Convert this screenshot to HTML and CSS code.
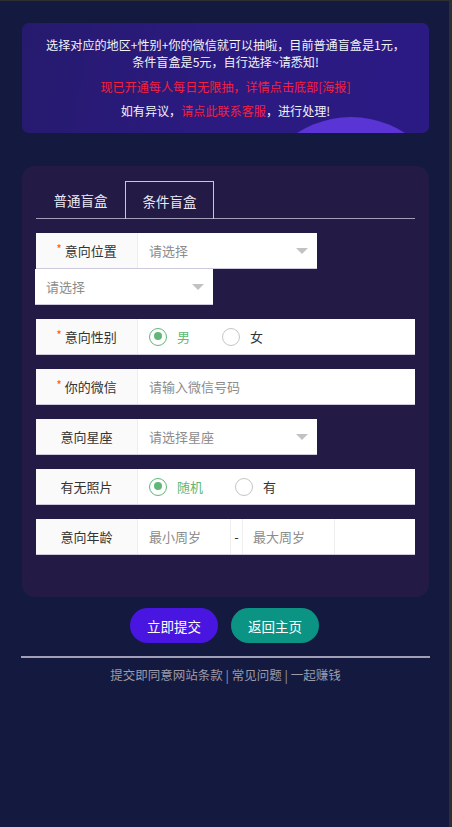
FILE: index.html
```html
<!DOCTYPE html>
<html lang="zh-CN">
<head>
<meta charset="utf-8">
<title>盲盒</title>
<link rel="stylesheet" href="styles.css">
</head>
<body>
<div class="frame">
  <div class="page">
    <section class="notice">
      <div class="notice-orb"></div>
      <p class="n1">选择对应的地区+性别+你的微信就可以抽啦，目前普通盲盒是1元，条件盲盒是5元，自行选择~请悉知!</p>
      <p class="n2 red">现已开通每人每日无限抽，详情点击底部[海报]</p>
      <p class="n3">如有异议，<span class="red">请点此联系客服</span>，进行处理!</p>
    </section>

    <section class="card">
      <div class="tabs">
        <div class="tab">普通盲盒</div>
        <div class="tab active">条件盲盒</div>
      </div>

      <div class="form">
        <div class="group">
          <div class="row short">
            <div class="label"><span class="star">*</span>意向位置</div>
            <div class="field select"><span class="ph">请选择</span><i class="arrow"></i></div>
          </div>
          <div class="sub-select"><span class="ph">请选择</span><i class="arrow"></i></div>
        </div>

        <div class="row">
          <div class="label"><span class="star">*</span>意向性别</div>
          <div class="field radios">
            <span class="radio on"><i class="dot"></i>男</span>
            <span class="radio"><i class="dot"></i>女</span>
          </div>
        </div>

        <div class="row">
          <div class="label"><span class="star">*</span>你的微信</div>
          <div class="field"><span class="ph">请输入微信号码</span></div>
        </div>

        <div class="row short">
          <div class="label">意向星座</div>
          <div class="field select"><span class="ph">请选择星座</span><i class="arrow"></i></div>
        </div>

        <div class="row">
          <div class="label">有无照片</div>
          <div class="field radios">
            <span class="radio on wider"><i class="dot"></i>随机</span>
            <span class="radio"><i class="dot"></i>有</span>
          </div>
        </div>

        <div class="row">
          <div class="label">意向年龄</div>
          <div class="field age">
            <span class="age-in"><span class="ph">最小周岁</span></span>
            <span class="dash">-</span>
            <span class="age-in"><span class="ph">最大周岁</span></span>
          </div>
        </div>
      </div>
    </section>

    <div class="buttons">
      <button class="btn submit">立即提交</button>
      <button class="btn home">返回主页</button>
    </div>

    <hr class="rule">
    <p class="footer">提交即同意网站条款 | 常见问题 | 一起赚钱</p>
  </div>
</div>
</body>
</html>
```

FILE: styles.css
```css
* { box-sizing: border-box; }
html, body { margin: 0; padding: 0; }
body {
  background: #2f2f31;
  font-family: "Noto Sans CJK SC", "Noto Sans", sans-serif;
  width: 452px;
  height: 827px;
  overflow: hidden;
}
.frame {
  margin-top: 1px;
  width: 449px;
  height: 826px;
  background: #141a3f;
  overflow: hidden;
}
.page {
  padding: 22px 20px 0 22px;
}
.notice {
  position: relative;
  overflow: hidden;
  border-radius: 7px;
  background: linear-gradient(100deg, #261a6e 0%, #2b1a80 45%, #2c1a84 100%);
  padding: 13px 8px 14px;
  text-align: center;
  color: #f2f2f7;
  font-size: 12.1px;
  line-height: 17px;
  height: 110px;
}
.notice p { margin: 0; position: relative; }
.notice .n1 { padding: 0 12px; }
.notice .n2 { margin-top: 8px; }
.notice .n3 { margin-top: 7px; }
.red { color: #f5203c; }
.notice-orb {
  position: absolute;
  left: 230px;
  top: 94px;
  width: 198px;
  height: 198px;
  border-radius: 50%;
  background: #5a34d4;
}

.card {
  margin-top: 33px;
  background: #231a45;
  border-radius: 13px;
  padding: 15px 14px 42px;
  height: 431px;
}
.tabs {
  display: flex;
  border-bottom: 1.5px solid #a29db8;
  height: 38px;
}
.tab {
  width: 89px;
  height: 38px;
  display: flex;
  align-items: center;
  justify-content: center;
  color: #eceaf4;
  font-size: 13.5px;
}
.tab.active {
  border: 1px solid #c9c6d8;
  border-bottom: none;
}

.form {
  margin-top: 14px;
  display: flex;
  flex-direction: column;
  gap: 14px;
}
.group { display: flex; flex-direction: column; }
.row {
  display: flex;
  height: 36px;
  width: 379px;
  background: #fff;
  border-bottom: 1px solid #cfc9dd;
  font-size: 13px;
}
.row.short { width: 281px; }
.label {
  width: 102px;
  flex: none;
  background: #fafafa;
  border-right: 1px solid #eeeeee;
  display: flex;
  align-items: center;
  justify-content: center;
  color: #333;
}
.star {
  color: #ff5722;
  margin-right: 3px;
  font-size: 12px;
  position: relative;
  top: -2px;
}
.field {
  flex: 1;
  display: flex;
  align-items: center;
  padding-left: 11px;
  position: relative;
}
.ph { color: #8c8c8c; }
.arrow {
  position: absolute;
  right: 9px;
  top: 15px;
  width: 0;
  height: 0;
  border-left: 6px solid transparent;
  border-right: 6px solid transparent;
  border-top: 6px solid #c2c2c2;
}
.sub-select {
  position: relative;
  margin-left: -1px;
  width: 178px;
  height: 36px;
  background: #fff;
  border-bottom: 1px solid #cfc9dd;
  display: flex;
  align-items: center;
  padding-left: 11px;
  font-size: 13px;
}
.radio {
  display: flex;
  align-items: center;
  color: #333;
  width: 73px;
}
.radio.wider { width: 86px; }
.radio.on { color: #5fb878; }
.dot {
  width: 18px;
  height: 18px;
  border-radius: 50%;
  border: 1.5px solid #c6c6c6;
  margin-right: 10px;
  position: relative;
}
.radio.on .dot { border-color: #5fb878; }
.radio.on .dot::after {
  content: "";
  position: absolute;
  left: 3.5px;
  top: 3.5px;
  width: 8px;
  height: 8px;
  border-radius: 50%;
  background: #5fb878;
}
.age { padding-left: 1px; }
.age-in {
  width: 92px;
  height: 100%;
  display: flex;
  align-items: center;
  padding-left: 10px;
  border-right: 1px solid #eeeeee;
}
.dash {
  width: 12px;
  color: #333;
  border-right: 1px solid #eeeeee;
  height: 100%;
  display: flex;
  align-items: center;
  justify-content: center;
}

.buttons {
  margin-top: 11px;
  display: flex;
  justify-content: center;
  gap: 13px;
  padding-right: 2px;
}
.btn {
  width: 88px;
  height: 35px;
  border: none;
  border-radius: 18px;
  color: #fff;
  font-family: inherit;
  font-size: 13.5px;
  padding: 0;
}
.submit { background: #4816e0; }
.home { background: #0b9384; }
.rule {
  margin: 13px 0 0 -1px;
  width: 409px;
  border: none;
  height: 2px;
  background: #a19fb6;
}
.footer {
  margin: 7px 0 0;
  text-align: center;
  color: #9c9aab;
  font-size: 12.5px;
  line-height: 20px;
}
```
